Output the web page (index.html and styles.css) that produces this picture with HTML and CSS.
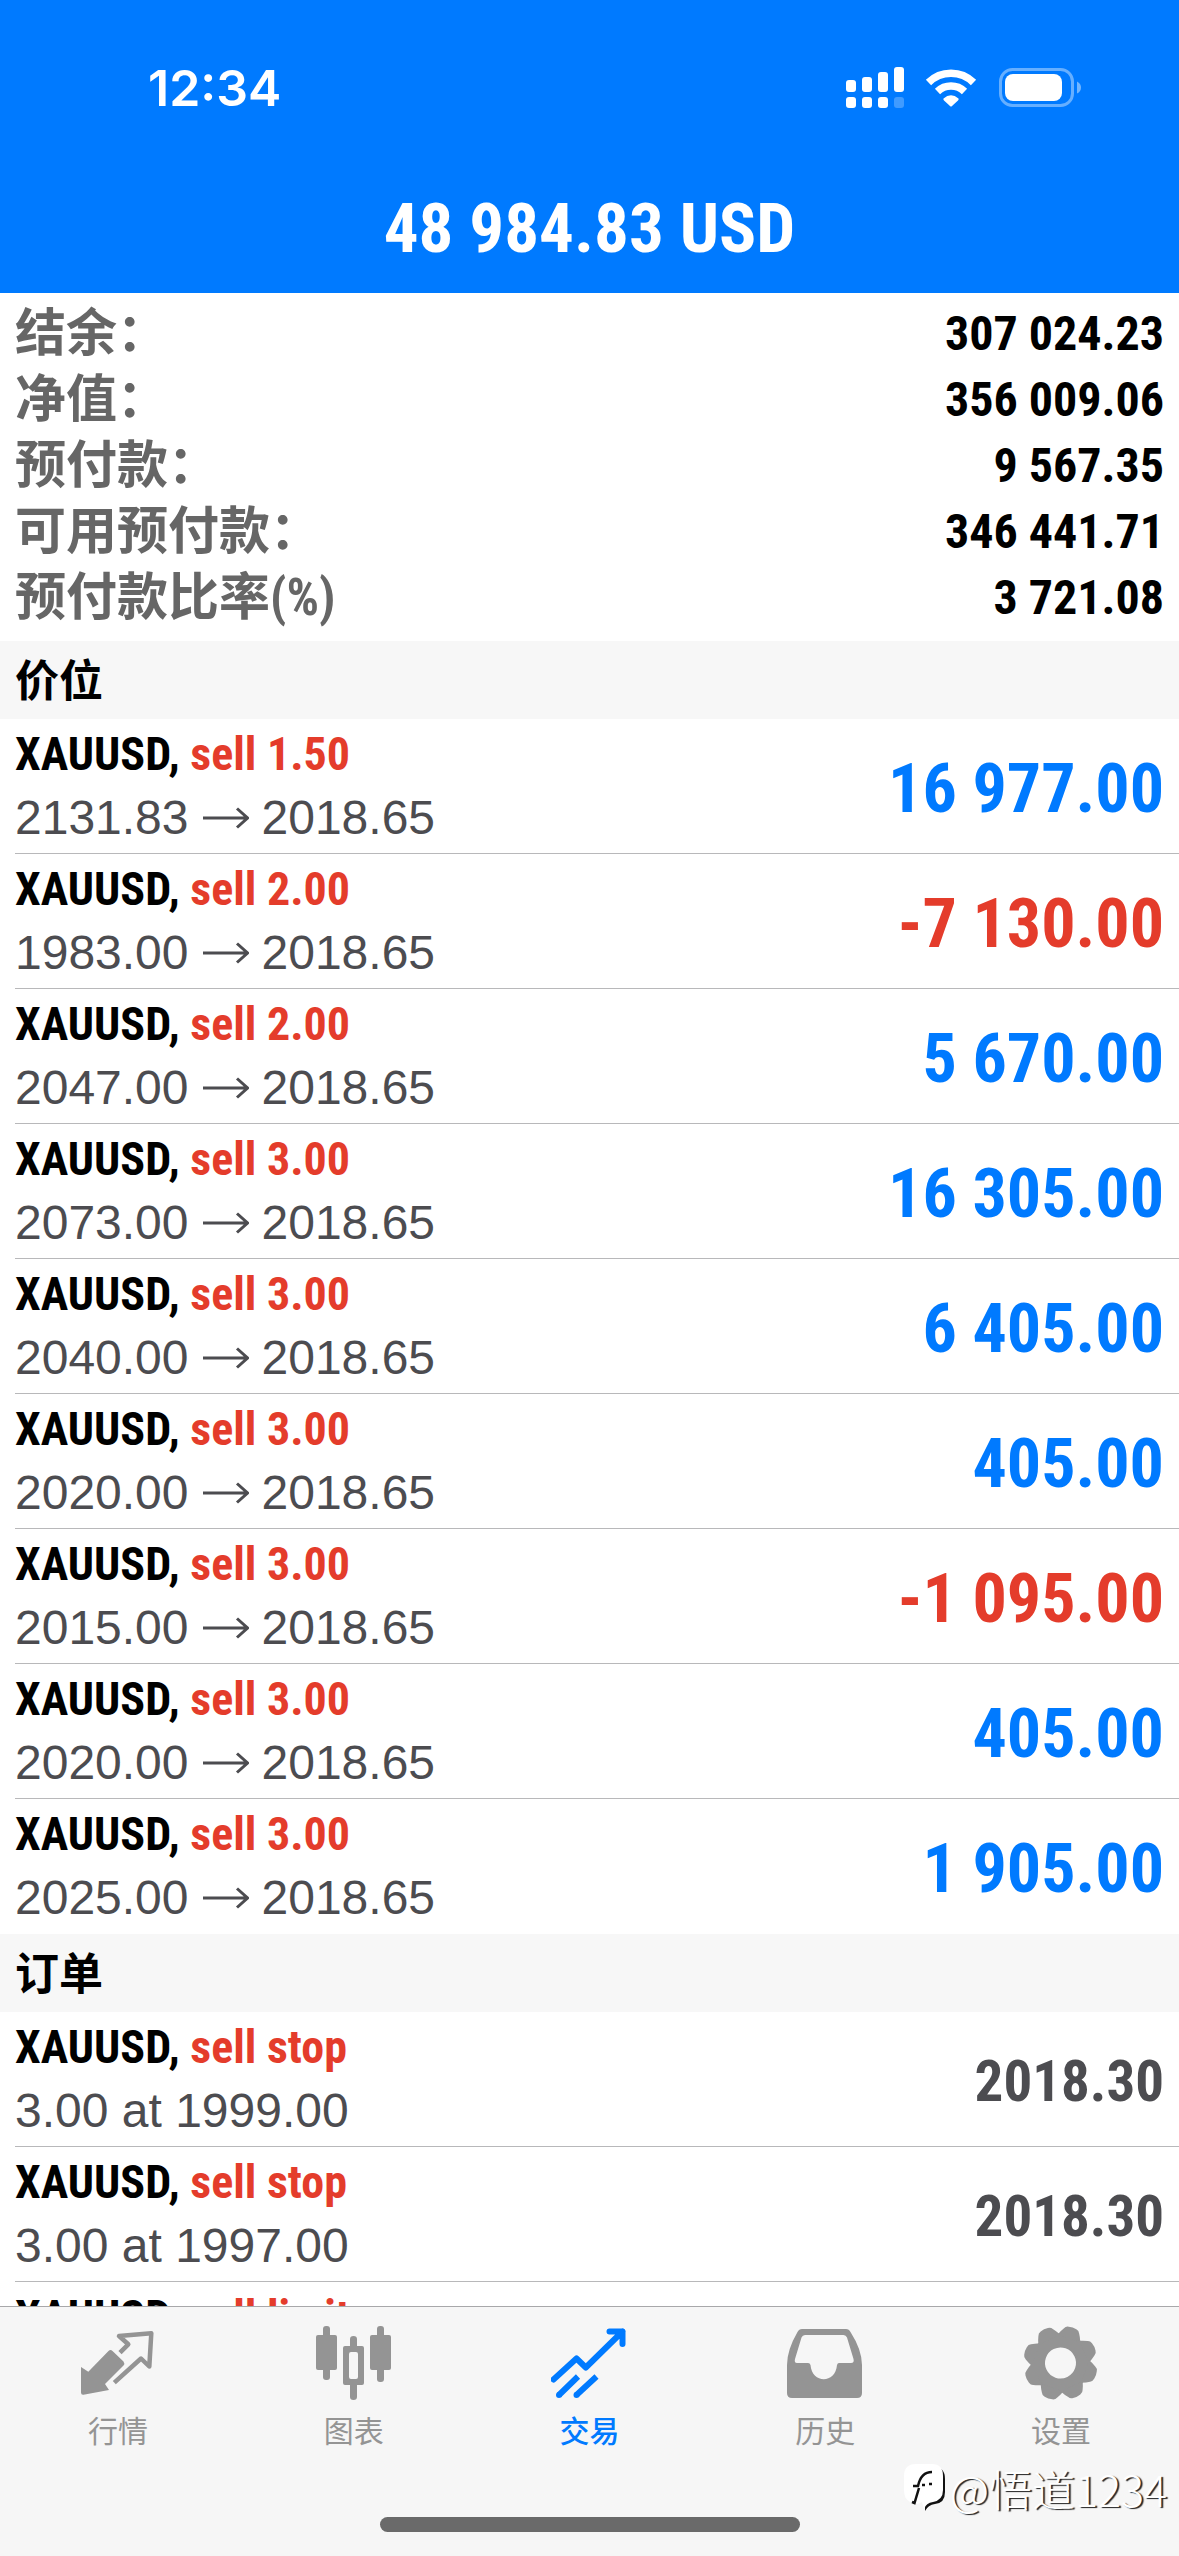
FILE: index.html
```html
<!DOCTYPE html>
<html lang="zh-CN">
<head>
<meta charset="utf-8">
<meta name="viewport" content="width=device-width, initial-scale=1">
<title>交易</title>
<link rel="stylesheet" href="styles.css">
</head>
<body>
<svg class="defs" aria-hidden="true">
  <symbol id="arrow" viewBox="0 0 46 24">
    <path d="M0 12H44M34 2.500L44.500 12L34 21.500" fill="none" stroke="currentColor" stroke-width="3"/>
  </symbol>
</svg>

<header class="top">
  <div class="status">
    <time class="clock">12:34</time>
    <svg class="status-icons" viewBox="0 0 240 44" fill="#fff" aria-hidden="true">
      <rect x="1" y="14" width="10" height="12" rx="3"/>
      <rect x="17" y="11" width="10" height="15" rx="3"/>
      <rect x="33" y="6" width="10" height="20" rx="3"/>
      <rect x="49" y="1" width="10" height="25" rx="3"/>
      <rect x="1" y="31" width="10" height="11" rx="3"/>
      <rect x="17" y="31" width="10" height="11" rx="3"/>
      <rect x="33" y="31" width="10" height="11" rx="3"/>
      <rect x="49" y="31" width="10" height="11" rx="3" opacity=".25"/>
      <g fill="none" stroke="#fff" stroke-width="7.500">
        <path d="M83.500 16.500A32 32 0 0 1 128.500 16.500"/>
        <path d="M92.500 25.500A19.500 19.500 0 0 1 119.500 25.500"/>
      </g>
      <path d="M98.500 32.500Q106 26 113.500 32.500Q114 33.500 113 34.500L107 40Q106 41 105 40L99 34.500Q98 33.500 98.500 32.500Z"/>
      <rect x="155.500" y="3.500" width="72" height="36" rx="12" fill="none" stroke="#fff" stroke-width="3" opacity=".4"/>
      <rect x="160" y="8" width="57" height="27" rx="8"/>
      <path d="M232 15.500Q236 17.500 236 21.500Q236 25.500 232 27.500Z" opacity=".45"/>
    </svg>
  </div>
  <h1 class="total">48 984.83 USD</h1>
</header>

<main class="content">
  <dl class="summary">
    <div class="summary-row"><dt>结余：</dt><dd>307 024.23</dd></div>
    <div class="summary-row"><dt>净值：</dt><dd>356 009.06</dd></div>
    <div class="summary-row"><dt>预付款：</dt><dd>9 567.35</dd></div>
    <div class="summary-row"><dt>可用预付款：</dt><dd>346 441.71</dd></div>
    <div class="summary-row"><dt>预付款比率(%)</dt><dd>3 721.08</dd></div>
  </dl>

  <section>
    <h2 class="section-title">价位</h2>
    <ul class="list">
      <li class="row"><div><p class="symbol">XAUUSD, <span class="side">sell 1.50</span></p><p class="detail">2131.83<svg class="arrow" role="img" aria-label="→"><use href="#arrow"/></svg>2018.65</p></div><span class="profit">16 977.00</span></li>
      <li class="row"><div><p class="symbol">XAUUSD, <span class="side">sell 2.00</span></p><p class="detail">1983.00<svg class="arrow" role="img" aria-label="→"><use href="#arrow"/></svg>2018.65</p></div><span class="profit loss">-7 130.00</span></li>
      <li class="row"><div><p class="symbol">XAUUSD, <span class="side">sell 2.00</span></p><p class="detail">2047.00<svg class="arrow" role="img" aria-label="→"><use href="#arrow"/></svg>2018.65</p></div><span class="profit">5 670.00</span></li>
      <li class="row"><div><p class="symbol">XAUUSD, <span class="side">sell 3.00</span></p><p class="detail">2073.00<svg class="arrow" role="img" aria-label="→"><use href="#arrow"/></svg>2018.65</p></div><span class="profit">16 305.00</span></li>
      <li class="row"><div><p class="symbol">XAUUSD, <span class="side">sell 3.00</span></p><p class="detail">2040.00<svg class="arrow" role="img" aria-label="→"><use href="#arrow"/></svg>2018.65</p></div><span class="profit">6 405.00</span></li>
      <li class="row"><div><p class="symbol">XAUUSD, <span class="side">sell 3.00</span></p><p class="detail">2020.00<svg class="arrow" role="img" aria-label="→"><use href="#arrow"/></svg>2018.65</p></div><span class="profit">405.00</span></li>
      <li class="row"><div><p class="symbol">XAUUSD, <span class="side">sell 3.00</span></p><p class="detail">2015.00<svg class="arrow" role="img" aria-label="→"><use href="#arrow"/></svg>2018.65</p></div><span class="profit loss">-1 095.00</span></li>
      <li class="row"><div><p class="symbol">XAUUSD, <span class="side">sell 3.00</span></p><p class="detail">2020.00<svg class="arrow" role="img" aria-label="→"><use href="#arrow"/></svg>2018.65</p></div><span class="profit">405.00</span></li>
      <li class="row"><div><p class="symbol">XAUUSD, <span class="side">sell 3.00</span></p><p class="detail">2025.00<svg class="arrow" role="img" aria-label="→"><use href="#arrow"/></svg>2018.65</p></div><span class="profit">1 905.00</span></li>
    </ul>
  </section>

  <section>
    <h2 class="section-title">订单</h2>
    <ul class="list">
      <li class="row"><div><p class="symbol">XAUUSD, <span class="side">sell stop</span></p><p class="detail">3.00 at 1999.00</p></div><span class="price">2018.30</span></li>
      <li class="row"><div><p class="symbol">XAUUSD, <span class="side">sell stop</span></p><p class="detail">3.00 at 1997.00</p></div><span class="price">2018.30</span></li>
      <li class="row row-top"><p class="symbol">XAUUSD, <span class="side">sell limit</span></p></li>
    </ul>
  </section>
</main>

<footer class="bottom">
  <nav class="tabs">
    <a class="tab" href="#quotes">
      <svg class="tab-icon" viewBox="0 0 76 76" aria-hidden="true">
        <path d="M1 42L8.300 46.700L28.500 26Q30.500 24 32.500 26L43.500 36.500Q45 38.500 43.500 40.500L25 59L29 65L3.500 69.700Q1 70 1 67.500Z" fill="currentColor"/>
        <path d="M40 27.700L48.300 19.300L39 11L71.300 8.300L69.300 41.500L61 33.500L34.300 57.700" fill="none" stroke="currentColor" stroke-width="4.500" stroke-linejoin="round"/>
      </svg>
      <span>行情</span>
    </a>
    <a class="tab" href="#chart">
      <svg class="tab-icon" viewBox="0 0 76 76" fill="currentColor" aria-hidden="true">
        <rect x="0" y="10" width="21" height="35" rx="2"/>
        <rect x="7" y="1" width="7" height="54" rx="3"/>
        <rect x="54" y="10" width="21" height="35" rx="2"/>
        <rect x="61" y="1" width="7" height="56" rx="3"/>
        <path fill-rule="evenodd" d="M29 21H46Q48 21 48 23V58Q48 60 46 60H29Q27 60 27 58V23Q27 21 29 21ZM35 27Q33 27 33 29V52Q33 54 35 54H40Q42 54 42 52V29Q42 27 40 27Z"/>
        <path d="M34 22V14Q34 11 37.500 11Q41 11 41 14V22ZM34 59V72Q34 75 37.500 75Q41 75 41 72V59Z"/>
      </svg>
      <span>图表</span>
    </a>
    <a class="tab active" href="#trade" aria-current="page">
      <svg class="tab-icon" viewBox="0 0 76 76" fill="none" stroke="currentColor" stroke-width="6" stroke-linejoin="round" aria-hidden="true">
        <path d="M2.500 54.500L25.500 33.500L34.800 42.500L71.500 6.500M58.500 6.500H71.500V19" stroke-linecap="round"/>
        <path d="M64 6H72V14Z" fill="currentColor" stroke-width="2"/>
        <path d="M8 70L27 51.500M25.500 70L45.500 51.500"/>
        <g fill="currentColor" stroke="none"><circle cx="8" cy="70" r="3"/><circle cx="25.500" cy="70" r="3"/></g>
      </svg>
      <span>交易</span>
    </a>
    <a class="tab" href="#history">
      <svg class="tab-icon" viewBox="0 0 76 76" fill="currentColor" aria-hidden="true">
        <path fill-rule="evenodd" d="M15 4H59Q62 4 63.500 7Q75 25 75 40V68Q75 73 70 73H5Q0 73 0 68V40Q0 25 10.500 7Q12 4 15 4ZM18 10Q15.500 10 14.500 12.500L8 34Q7 38 10 38H21Q23 38 23.500 40C25 59 48.500 59 50 40Q50.500 38 52 38H64Q67.500 38 66.500 34L60 12.500Q59 10 56.500 10Z"/>
      </svg>
      <span>历史</span>
    </a>
    <a class="tab" href="#settings">
      <svg class="tab-icon" viewBox="0 0 76 76" fill="currentColor" aria-hidden="true">
        <g transform="translate(37.500 38) rotate(19)">
          <circle r="22.500" fill="none" stroke="currentColor" stroke-width="14"/>
          <path id="tooth" d="M-12 -26Q-10 -31 -8 -34Q-7 -36.500 -4 -37Q0 -38 4 -37Q7 -36.500 8 -34Q10 -31 12 -26Z"/>
          <use href="#tooth" transform="rotate(45)"/>
          <use href="#tooth" transform="rotate(90)"/>
          <use href="#tooth" transform="rotate(135)"/>
          <use href="#tooth" transform="rotate(180)"/>
          <use href="#tooth" transform="rotate(225)"/>
          <use href="#tooth" transform="rotate(270)"/>
          <use href="#tooth" transform="rotate(315)"/>
        </g>
      </svg>
      <span>设置</span>
    </a>
  </nav>
  <div class="home-bar"></div>
  <div class="watermark">
    <svg class="watermark-logo" viewBox="0 0 42 48" aria-hidden="true">
      <path d="M13 3H30Q41 3 41 15V28Q41 39 31 40Q24 41 21 47V41" fill="#111"/>
      <path d="M12 0H28Q39 0 39 12V26Q39 36 29 38Q22 39 20 45L18 38L14 40L6 38Q0 35 0 26V12Q0 0 12 0Z" fill="#fff"/>
      <path d="M8 38L10.500 39L15 24M9 22H14Q17 8 28 8M18 21H21M25 20H28" fill="none" stroke="#111" stroke-width="2.500"/>
    </svg>
    <span>@悟道1234</span>
  </div>
</footer>
</body>
</html>
```

FILE: styles.css
```css
:root {
  --blue: #007aff;
  --red: #e43c2b;
  --condensed: "Roboto Condensed", "Liberation Sans", sans-serif;
  --cjk: "Noto Sans CJK SC", sans-serif;
}

* { box-sizing: border-box; }

body {
  margin: 0;
  height: 100vh;
  display: flex;
  flex-direction: column;
  overflow: hidden;
  background: #fff;
  color: #000;
  font-family: "Liberation Sans", "Noto Sans CJK SC", sans-serif;
}

h1, h2, p, ul, dl, dd { margin: 0; padding: 0; }

.defs {
  position: absolute;
  width: 0;
  height: 0;
}

/* Header */
.top {
  flex: none;
  padding: 58px 0 24px;
  background: var(--blue);
  color: #fff;
}

.status {
  display: flex;
  align-items: center;
  justify-content: space-between;
  padding: 0 94px 0 148px;
}

.clock {
  font: 600 50px/60px "Inter", sans-serif;
}

.status-icons {
  width: 240px;
  height: 44px;
}

.total {
  margin-top: 71px;
  font: 700 69px/80px var(--condensed);
  text-align: center;
}

/* Account summary */
.content {
  flex: 1;
  min-height: 0;
  overflow: hidden;
}

.summary { padding: 6px 15px 12px; }

.summary-row {
  display: flex;
  justify-content: space-between;
  height: 66px;
}

.summary dt {
  color: #666;
  font: 700 51px/70px "Roboto Condensed", var(--cjk);
}

.summary dd {
  font: 700 48px/70px var(--condensed);
}

.section-title {
  padding: 0 15px 4px;
  background: #f7f7f7;
  font: 700 44px/74px var(--cjk);
}

/* Positions and orders */
.list { list-style: none; }

.row {
  display: flex;
  align-items: center;
  justify-content: space-between;
  height: 135px;
  margin-left: 15px;
  padding-right: 15px;
  border-bottom: 1px solid #b8b8ba;
}

.row:last-child { border-bottom-color: transparent; }

.row-top {
  align-items: flex-start;
  padding-top: 4px;
}

.symbol {
  font: 700 46px/63px var(--condensed);
}

.side { color: var(--red); }

.detail {
  color: #4c4c50;
  font-size: 48px;
  line-height: 63px;
}

.arrow {
  width: 46px;
  height: 24px;
  margin: 0 13px 4px 14px;
}

.profit,
.price {
  padding-top: 5px;
  color: var(--blue);
  font: 700 68px/80px var(--condensed);
}

.loss { color: var(--red); }

.price {
  color: #4c4c50;
  font-size: 57px;
}

/* Tab bar */
.bottom {
  position: relative;
  flex: none;
  padding: 18px 0 24px;
  border-top: 1px solid #a8a8aa;
  background: #f6f6f6;
}

.tabs { display: flex; }

.tab {
  flex: 1;
  display: flex;
  flex-direction: column;
  align-items: center;
  gap: 6px;
  color: #949494;
  font: 400 30px/44px var(--cjk);
  text-decoration: none;
}

.active {
  color: var(--blue);
  font-weight: 500;
}

.tab-icon {
  width: 76px;
  height: 76px;
}

.home-bar {
  width: 420px;
  height: 15px;
  margin: 66px auto 0;
  border-radius: 8px;
  background: #6a6a6a;
}

.watermark {
  position: absolute;
  right: 12px;
  bottom: 38px;
  display: flex;
  align-items: center;
  gap: 4px;
  color: #fff;
  font: 300 43px/60px var(--cjk);
  text-shadow: 2px 1px 1px #222;
}

.watermark-logo {
  width: 42px;
  height: 48px;
}
```
